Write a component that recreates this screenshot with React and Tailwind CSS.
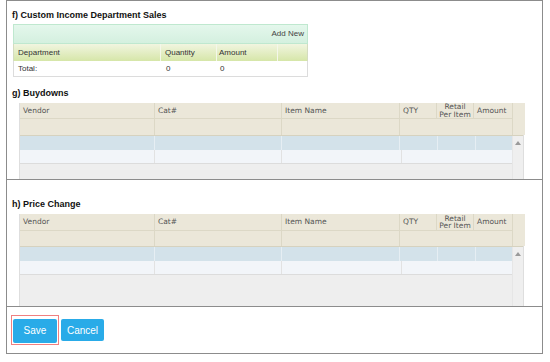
import React from "react";

const gridCols = "grid grid-cols-[135px_127px_118px_37px_37px_39px_12px]";

const Heading = ({ children }) => (
    <div className="h-[12px] text-[9px] leading-[12px] font-bold text-[#111] font-['Liberation_Sans',Arial,sans-serif]">
        {children}
    </div>
);

const DataGrid = ({ headH, filterH, height }) => {
    const head = "bg-[#ebe7d9] border-r border-[#dcd8c6] text-[#555]";
    return (
        <div
            className={`ml-[7px] w-[505px] ${height} flex flex-col bg-[#efefef] border-l border-r border-[#dedede] font-['DejaVu_Sans',Verdana,sans-serif] text-[7.5px]`}
        >
            <div className={`${gridCols} border-b border-[#d6d2bf]`}>
                <div className={`${head} ${headH} flex items-center pl-[3px] border-b border-[#dcd8c6]`}>Vendor</div>
                <div className={`${head} ${headH} flex items-center pl-[3px] border-b border-[#dcd8c6]`}>Cat#</div>
                <div className={`${head} ${headH} flex items-center pl-[3px] border-b border-[#dcd8c6]`}>Item Name</div>
                <div className={`${head} ${headH} flex items-center pl-[3px] border-b border-[#dcd8c6]`}>QTY</div>
                <div className={`${head} ${headH} flex flex-col items-center justify-center leading-[7.5px] border-b border-[#dcd8c6] whitespace-nowrap`}>
                    <span>Retail</span>
                    <span>Per Item</span>
                </div>
                <div className={`${head} ${headH} flex items-center pl-[3px] border-b border-[#dcd8c6]`}>Amount</div>
                <div className="row-span-2 bg-[#ebe7d9]" />
                <div className={`${head} ${filterH}`} />
                <div className={`${head} ${filterH}`} />
                <div className={`${head} ${filterH}`} />
                <div className={`${head} ${filterH} col-span-3`} />
            </div>
            <div className="flex flex-1">
                <div className="w-[492px] flex flex-col bg-[#eeeeee]">
                    <div className="grid grid-cols-[135px_127px_118px_38px_38px_36px] h-[14px] bg-[#d3e2ea]">
                        <div className="border-r border-[#e6eef3]" />
                        <div className="border-r border-[#e6eef3]" />
                        <div className="border-r border-[#e6eef3]" />
                        <div className="border-r border-[#e6eef3]" />
                        <div className="border-r border-[#e6eef3]" />
                        <div />
                    </div>
                    <div className="grid grid-cols-[135px_127px_120px_110px] h-[14px] bg-[#f2f5f9] border-b border-[#dcdcdc]">
                        <div className="border-r border-[#e2e2e2]" />
                        <div className="border-r border-[#e2e2e2]" />
                        <div className="border-r border-[#e2e2e2]" />
                        <div />
                    </div>
                </div>
                <div className="w-[11px] flex justify-center pt-[5px] border-l border-[#e6e6e6]">
                    <svg width="6" height="4" viewBox="0 0 6 4">
                        <path d="M3 0 L6 4 L0 4 Z" fill="#9a9a9a" />
                    </svg>
                </div>
            </div>
        </div>
    );
};

const App = () => {
    return (
        <div className="w-[550px] h-[362px] bg-white pl-[6px] font-['Liberation_Sans',Arial,sans-serif]">
            <div className="w-[537px] h-[180px] border border-[#8c8c8c] px-[5px] pt-[8px] flex flex-col">
                <Heading>f) Custom Income Department Sales</Heading>
                <div className="mt-[3px] ml-[1px] w-[295px] text-[8px] text-[#333]">
                    <div className="h-[20px] border border-[#bfe8cf] bg-gradient-to-b from-[#e4f7ec] to-[#d4f0df] flex items-center justify-end pr-[3px] text-[#444]">
                        Add New
                    </div>
                    <div className="grid grid-cols-[147px_56px_61px_31px] h-[17px] bg-gradient-to-b from-[#f1f5e0] to-[#d6e6a8] border-x border-[#d4dcc0]">
                        <div className="flex items-center pl-[4px] border-r border-[#f4f7ea]">Department</div>
                        <div className="flex items-center pl-[4px] border-r border-[#f4f7ea]">Quantity</div>
                        <div className="flex items-center pl-[2px] border-r border-[#f4f7ea]">Amount</div>
                        <div />
                    </div>
                    <div className="grid grid-cols-[147px_56px_61px_31px] h-[16px] border border-t-0 border-[#dcdcdc] bg-white">
                        <div className="flex items-center pl-[4px]">Total:</div>
                        <div className="flex items-center pl-[5px]">0</div>
                        <div className="flex items-center pl-[3px]">0</div>
                        <div />
                    </div>
                </div>
                <div className="mt-[10px]">
                    <Heading>g) Buydowns</Heading>
                </div>
                <div className="mt-[4px] flex-1 flex">
                    <DataGrid headH="h-[16px]" filterH="h-[16px]" height="h-full" />
                </div>
            </div>
            <div className="w-[537px] h-[127px] border-x border-b border-[#8c8c8c] px-[5px] pt-[18px] flex flex-col">
                <Heading>h) Price Change</Heading>
                <div className="mt-[4px] flex-1 flex">
                    <DataGrid headH="h-[17px]" filterH="h-[15px]" height="h-full" />
                </div>
            </div>
            <div className="w-[537px] h-[47px] border-x border-b border-[#8c8c8c] pl-[4px] flex items-center gap-[2px]">
                <div className="border border-[#f08080] p-[1px]">
                    <button className="w-[44px] h-[24px] rounded-[2px] bg-[#29abe8] text-white text-[10px]">Save</button>
                </div>
                <button className="w-[43px] h-[22px] rounded-[2px] bg-[#29abe8] text-white text-[10px]">Cancel</button>
            </div>
        </div>
    );
};

export default App;
